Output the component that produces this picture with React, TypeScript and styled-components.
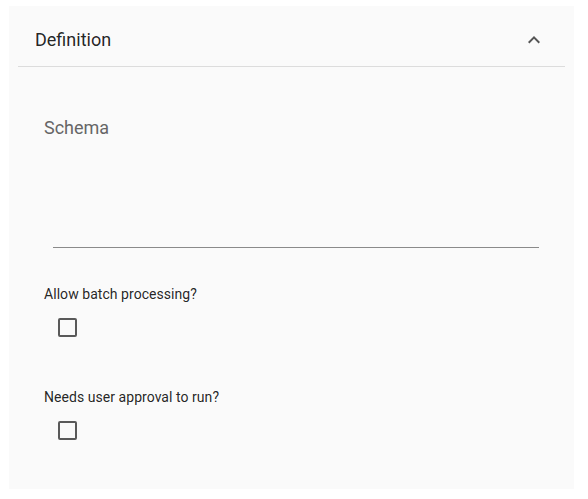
import React from "react";
import styled, { createGlobalStyle } from "styled-components";

const Global = createGlobalStyle`
  html, body { margin: 0; padding: 0; background: #ffffff; }
  body { font-family: Roboto, "Liberation Sans", Arial, sans-serif; }
  * { box-sizing: border-box; }
`;

const Panel = styled.section`
  margin: 6px 0 0 9px;
  width: 565px;
  height: 483px;
  background: #fafafa;
  display: flex;
  flex-direction: column;
`;

const Header = styled.div`
  height: 61px;
  margin: 0 9px;
  padding: 7px 19px 0 17px;
  display: flex;
  align-items: center;
  justify-content: space-between;
  border-bottom: 1px solid #dcdcdc;
`;

const Title = styled.h2`
  margin: 0;
  font-size: 18px;
  font-weight: 400;
  line-height: 24px;
  color: rgba(0, 0, 0, 0.87);
`;

const IconBox = styled.span`
  width: 24px;
  height: 24px;
  display: flex;
  color: #555;
`;

const Body = styled.div`
  padding: 49px 35px 0 35px;
  display: flex;
  flex-direction: column;
`;

const FieldLabel = styled.label`
  font-size: 18px;
  line-height: 24px;
  color: #666;
`;

const FieldArea = styled.div`
  margin-left: 9px;
  height: 108px;
  border-bottom: 1px solid #8a8a8a;
`;

const CheckGroup = styled.div<{ $top: number }>`
  margin-top: ${(p) => p.$top}px;
  display: flex;
  flex-direction: column;
  align-items: flex-start;
`;

const CheckLabel = styled.span`
  font-size: 14px;
  line-height: 20px;
  letter-spacing: 0.05px;
  color: rgba(0, 0, 0, 0.87);
  padding-top: 1px;
`;

const Box = styled.span`
  margin: 14px 0 0 14px;
  width: 19px;
  height: 19px;
  border: 2px solid #595959;
  border-radius: 2px;
  display: block;
`;

const ExpandLess = () => (
  <svg width="24" height="24" viewBox="0 0 24 24" fill="currentColor">
    <path d="M12 8l-6 6 1.41 1.41L12 10.83l4.59 4.58L18 14z" />
  </svg>
);

export default function App() {
  return (
    <>
      <Global />
      <Panel>
        <Header>
          <Title>Definition</Title>
          <IconBox>
            <ExpandLess />
          </IconBox>
        </Header>
        <Body>
          <FieldLabel>Schema</FieldLabel>
          <FieldArea />
          <CheckGroup $top={35}>
            <CheckLabel>Allow batch processing?</CheckLabel>
            <Box />
          </CheckGroup>
          <CheckGroup $top={49}>
            <CheckLabel>Needs user approval to run?</CheckLabel>
            <Box />
          </CheckGroup>
        </Body>
      </Panel>
    </>
  );
}
